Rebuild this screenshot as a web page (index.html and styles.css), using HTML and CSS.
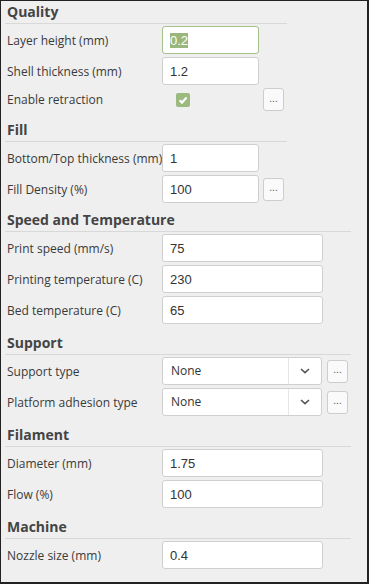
FILE: index.html
```html
<!DOCTYPE html>
<html lang="en">
<head>
    <meta charset="UTF-8">
    <meta name="viewport" content="width=device-width, initial-scale=1.0">
    <title>Print Settings</title>

    <link rel="stylesheet" href="styles.css">
</head>
<body>
    <div class="panel">
        <section class="section section--narrow section--first">
            <h2 class="section-title">Quality</h2>
            <div class="rows">
                <div class="row">
                    <label class="row-label" for="layer-height">Layer height (mm)</label>
                    <input class="field field--small field--active" id="layer-height" type="text" value="0.2">
                </div>
                <div class="row">
                    <label class="row-label" for="shell">Shell thickness (mm)</label>
                    <input class="field field--small" id="shell" type="text" value="1.2">
                </div>
                <div class="row row--short">
                    <span class="row-label">Enable retraction</span>
                    <span class="check-cell">
                        <span class="checkbox">
                            <svg width="14" height="14" viewBox="0 0 14 14"><path d="M3.6 7.2 L6 9.6 L10.6 4.6" fill="none" stroke="#fff" stroke-width="2.2"/></svg>
                        </span>
                    </span>
                    <button class="more">...</button>
                </div>
            </div>
        </section>

        <section class="section section--narrow">
            <h2 class="section-title">Fill</h2>
            <div class="rows">
                <div class="row">
                    <label class="row-label" for="bottom-top">Bottom/Top thickness (mm)</label>
                    <input class="field field--small" id="bottom-top" type="text" value="1">
                </div>
                <div class="row">
                    <label class="row-label" for="density">Fill Density (%)</label>
                    <input class="field field--small" id="density" type="text" value="100">
                    <button class="more">...</button>
                </div>
            </div>
        </section>

        <section class="section section--tight">
            <h2 class="section-title">Speed and Temperature</h2>
            <div class="rows">
                <div class="row">
                    <label class="row-label" for="speed">Print speed (mm/s)</label>
                    <input class="field" id="speed" type="text" value="75">
                </div>
                <div class="row">
                    <label class="row-label" for="print-temp">Printing temperature (C)</label>
                    <input class="field" id="print-temp" type="text" value="230">
                </div>
                <div class="row">
                    <label class="row-label" for="bed-temp">Bed temperature (C)</label>
                    <input class="field" id="bed-temp" type="text" value="65">
                </div>
            </div>
        </section>

        <section class="section">
            <h2 class="section-title">Support</h2>
            <div class="rows">
                <div class="row">
                    <span class="row-label">Support type</span>
                    <div class="select">
                        <span class="select-value">None</span>
                        <span class="select-arrow">
                            <svg width="10" height="6" viewBox="0 0 10 6"><path d="M1 1 L5 4.6 L9 1" fill="none" stroke="#555" stroke-width="1.6"/></svg>
                        </span>
                    </div>
                    <button class="more more--wide-gap">...</button>
                </div>
                <div class="row">
                    <span class="row-label">Platform adhesion type</span>
                    <div class="select">
                        <span class="select-value">None</span>
                        <span class="select-arrow">
                            <svg width="10" height="6" viewBox="0 0 10 6"><path d="M1 1 L5 4.6 L9 1" fill="none" stroke="#555" stroke-width="1.6"/></svg>
                        </span>
                    </div>
                    <button class="more more--wide-gap">...</button>
                </div>
            </div>
        </section>

        <section class="section">
            <h2 class="section-title">Filament</h2>
            <div class="rows">
                <div class="row">
                    <label class="row-label" for="diameter">Diameter (mm)</label>
                    <input class="field" id="diameter" type="text" value="1.75">
                </div>
                <div class="row">
                    <label class="row-label" for="flow">Flow (%)</label>
                    <input class="field" id="flow" type="text" value="100">
                </div>
            </div>
        </section>

        <section class="section">
            <h2 class="section-title">Machine</h2>
            <div class="rows">
                <div class="row">
                    <label class="row-label" for="nozzle">Nozzle size (mm)</label>
                    <input class="field" id="nozzle" type="text" value="0.4">
                </div>
            </div>
        </section>
    </div>

    <script>
        var active = document.getElementById('layer-height');
        active.focus();
        active.select();
    </script>
</body>
</html>
```

FILE: styles.css
```css
html, body {
    margin: 0;
    padding: 0;
}
body {
    font-family: "Open Sans", "DejaVu Sans", sans-serif;
    color: #3a3a3a;
}
.panel {
    width: 369px;
    height: 584px;
    box-sizing: border-box;
    border-style: solid;
    border-color: #222;
    border-width: 1px 2px 2px 1px;
    background-color: #efefef;
    overflow: hidden;
}
.section {
    width: 346px;
    margin: 9px 0 0 4px;
}
.section--first {
    margin-top: 1px;
}
.section--tight {
    margin-top: 7px;
}
.section--narrow {
    width: 282px;
}
.section-title {
    margin: 0;
    padding: 0 2px 1px;
    font-size: 14px;
    line-height: 20px;
    font-weight: bold;
    color: #444;
    border-bottom: 1px solid #d8d8d8;
}
.rows {
    display: flex;
    flex-direction: column;
    gap: 3px;
    margin-top: 2px;
}
.row {
    display: flex;
    align-items: center;
    height: 28px;
}
.row--short {
    height: 23px;
}
.row-label {
    width: 157px;
    box-sizing: border-box;
    padding-left: 2px;
    font-size: 12px;
    white-space: nowrap;
}
.field {
    width: 161px;
    height: 28px;
    box-sizing: border-box;
    margin: 0;
    padding: 0 7px;
    border: 1px solid #cfcfcf;
    border-radius: 3px;
    background-color: #fff;
    font-family: "Liberation Sans", Arial, sans-serif;
    font-size: 13px;
    color: #333;
}
.field--small {
    width: 97px;
}
.field:focus,
.field--active {
    outline: none;
    border-color: #a4c28a;
}
.field::selection {
    background-color: #99b77c;
    color: #fff;
}
.check-cell {
    width: 97px;
    padding-left: 14px;
    box-sizing: border-box;
    display: flex;
}
.checkbox {
    width: 14px;
    height: 14px;
    border-radius: 2px;
    background-color: #9cb97f;
    display: flex;
}
.more {
    width: 21px;
    height: 23px;
    margin-left: 4px;
    padding: 0 0 3px;
    border: 1px solid #cdcdcd;
    border-radius: 3px;
    background-color: #fafafa;
    font-family: "Liberation Sans", Arial, sans-serif;
    font-size: 10px;
    color: #555;
    cursor: pointer;
}
.more--wide-gap {
    margin-left: 5px;
}
.select {
    width: 160px;
    height: 28px;
    box-sizing: border-box;
    display: flex;
    border: 1px solid #cfcfcf;
    border-radius: 3px;
    background-color: #fff;
}
.select-value {
    flex: 1;
    padding-left: 8px;
    font-size: 12px;
    line-height: 26px;
    color: #333;
}
.select-arrow {
    width: 32px;
    border-left: 1px solid #e6e6e6;
    display: flex;
    align-items: center;
    justify-content: center;
}
```
